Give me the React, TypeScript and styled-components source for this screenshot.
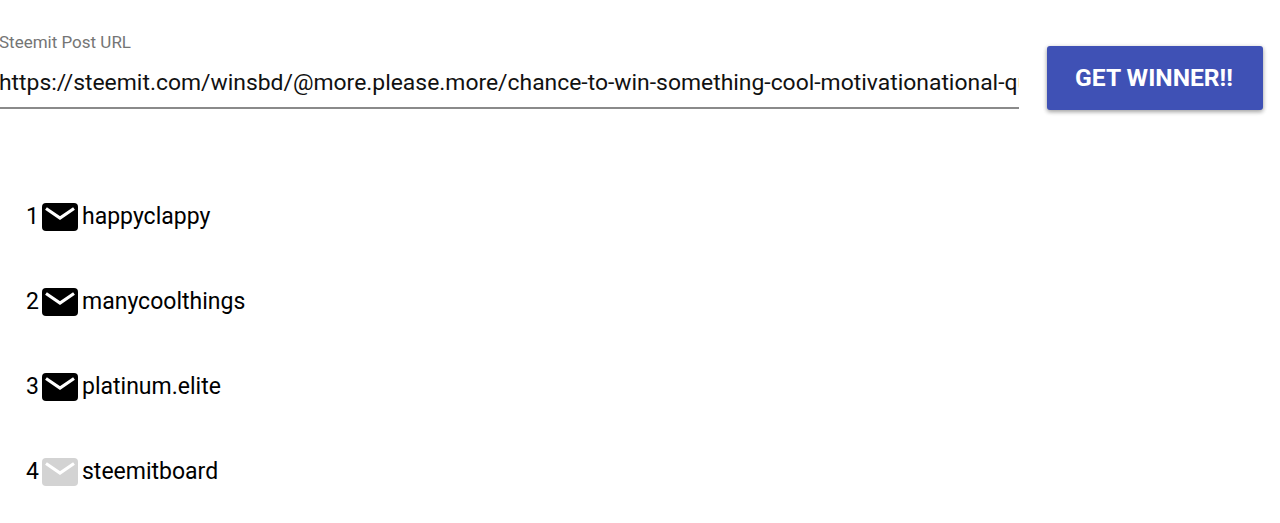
import React from "react";
import styled, { createGlobalStyle } from "styled-components";

const GlobalStyle = createGlobalStyle`
    html, body {
        margin: 0;
        padding: 0;
        background: #ffffff;
        font-family: Roboto, "Liberation Sans", sans-serif;
        overflow: hidden;
    }
`;

const Page = styled.div`
    width: 1280px;
    height: 523px;
    overflow: hidden;
`;

const FormRow = styled.div`
    display: flex;
    align-items: flex-start;
    gap: 28px;
    padding-top: 33px;
`;

const Field = styled.label`
    display: block;
    width: 1019px;
    flex: none;
`;

const FieldLabel = styled.div`
    font-size: 17px;
    line-height: 18px;
    color: #757575;
    margin-left: -1px;
`;

const FieldInput = styled.input`
    display: block;
    box-sizing: border-box;
    width: 1020px;
    height: 58px;
    margin: 0 0 0 -1px;
    padding: 6px 0 0;
    border: none;
    border-bottom: 2px solid #8a8a8a;
    outline: none;
    font-family: inherit;
    font-size: 22.9px;
    color: #111111;
    background: transparent;
`;

const WinnerButton = styled.button`
    flex: none;
    width: 216px;
    height: 64px;
    margin-top: 13px;
    padding: 0 2px 2px 0;
    border: none;
    border-radius: 3px;
    background: #3f51b5;
    color: #ffffff;
    font-family: inherit;
    font-size: 24.6px;
    font-weight: 700;
    box-shadow: 0 2px 4px rgba(0, 0, 0, 0.3), 0 1px 5px rgba(0, 0, 0, 0.12);
`;

const WinnerList = styled.ul`
    list-style: none;
    margin: 0;
    padding: 87px 0 0 26px;
    display: flex;
    flex-direction: column;
    gap: 45px;
`;

const WinnerRow = styled.li`
    display: flex;
    align-items: center;
    height: 40px;
    font-size: 23px;
    color: #000000;
`;

const Rank = styled.span`
    width: 16px;
    padding-bottom: 2px;
`;

const Name = styled.span`
    margin-left: 4px;
    padding-bottom: 2px;
`;

const MailSvg = styled.svg`
    display: block;
    flex: none;
`;

const MailIcon = ({ sent }: { sent: boolean }) => (
    <MailSvg width="36" height="28" viewBox="0 0 36 28">
        <rect width="36" height="28" rx="4" fill={sent ? "#000000" : "#d3d3d3"} />
        <path d="M4 5.5 L18 15 L32 5.5" fill="none" stroke="#ffffff" strokeWidth="3.2" />
    </MailSvg>
);

const winners = [
    { name: "happyclappy", sent: true },
    { name: "manycoolthings", sent: true },
    { name: "platinum.elite", sent: true },
    { name: "steemitboard", sent: false },
];

export default function App() {
    return (
        <Page>
            <GlobalStyle />
            <FormRow>
                <Field>
                    <FieldLabel>Steemit Post URL</FieldLabel>
                    <FieldInput
                        readOnly
                        value="https://steemit.com/winsbd/@more.please.more/chance-to-win-something-cool-motivationational-quotes"
                    />
                </Field>
                <WinnerButton>GET WINNER!!</WinnerButton>
            </FormRow>
            <WinnerList>
                {winners.map((w, i) => (
                    <WinnerRow key={w.name}>
                        <Rank>{i + 1}</Rank>
                        <MailIcon sent={w.sent} />
                        <Name>{w.name}</Name>
                    </WinnerRow>
                ))}
            </WinnerList>
        </Page>
    );
}
